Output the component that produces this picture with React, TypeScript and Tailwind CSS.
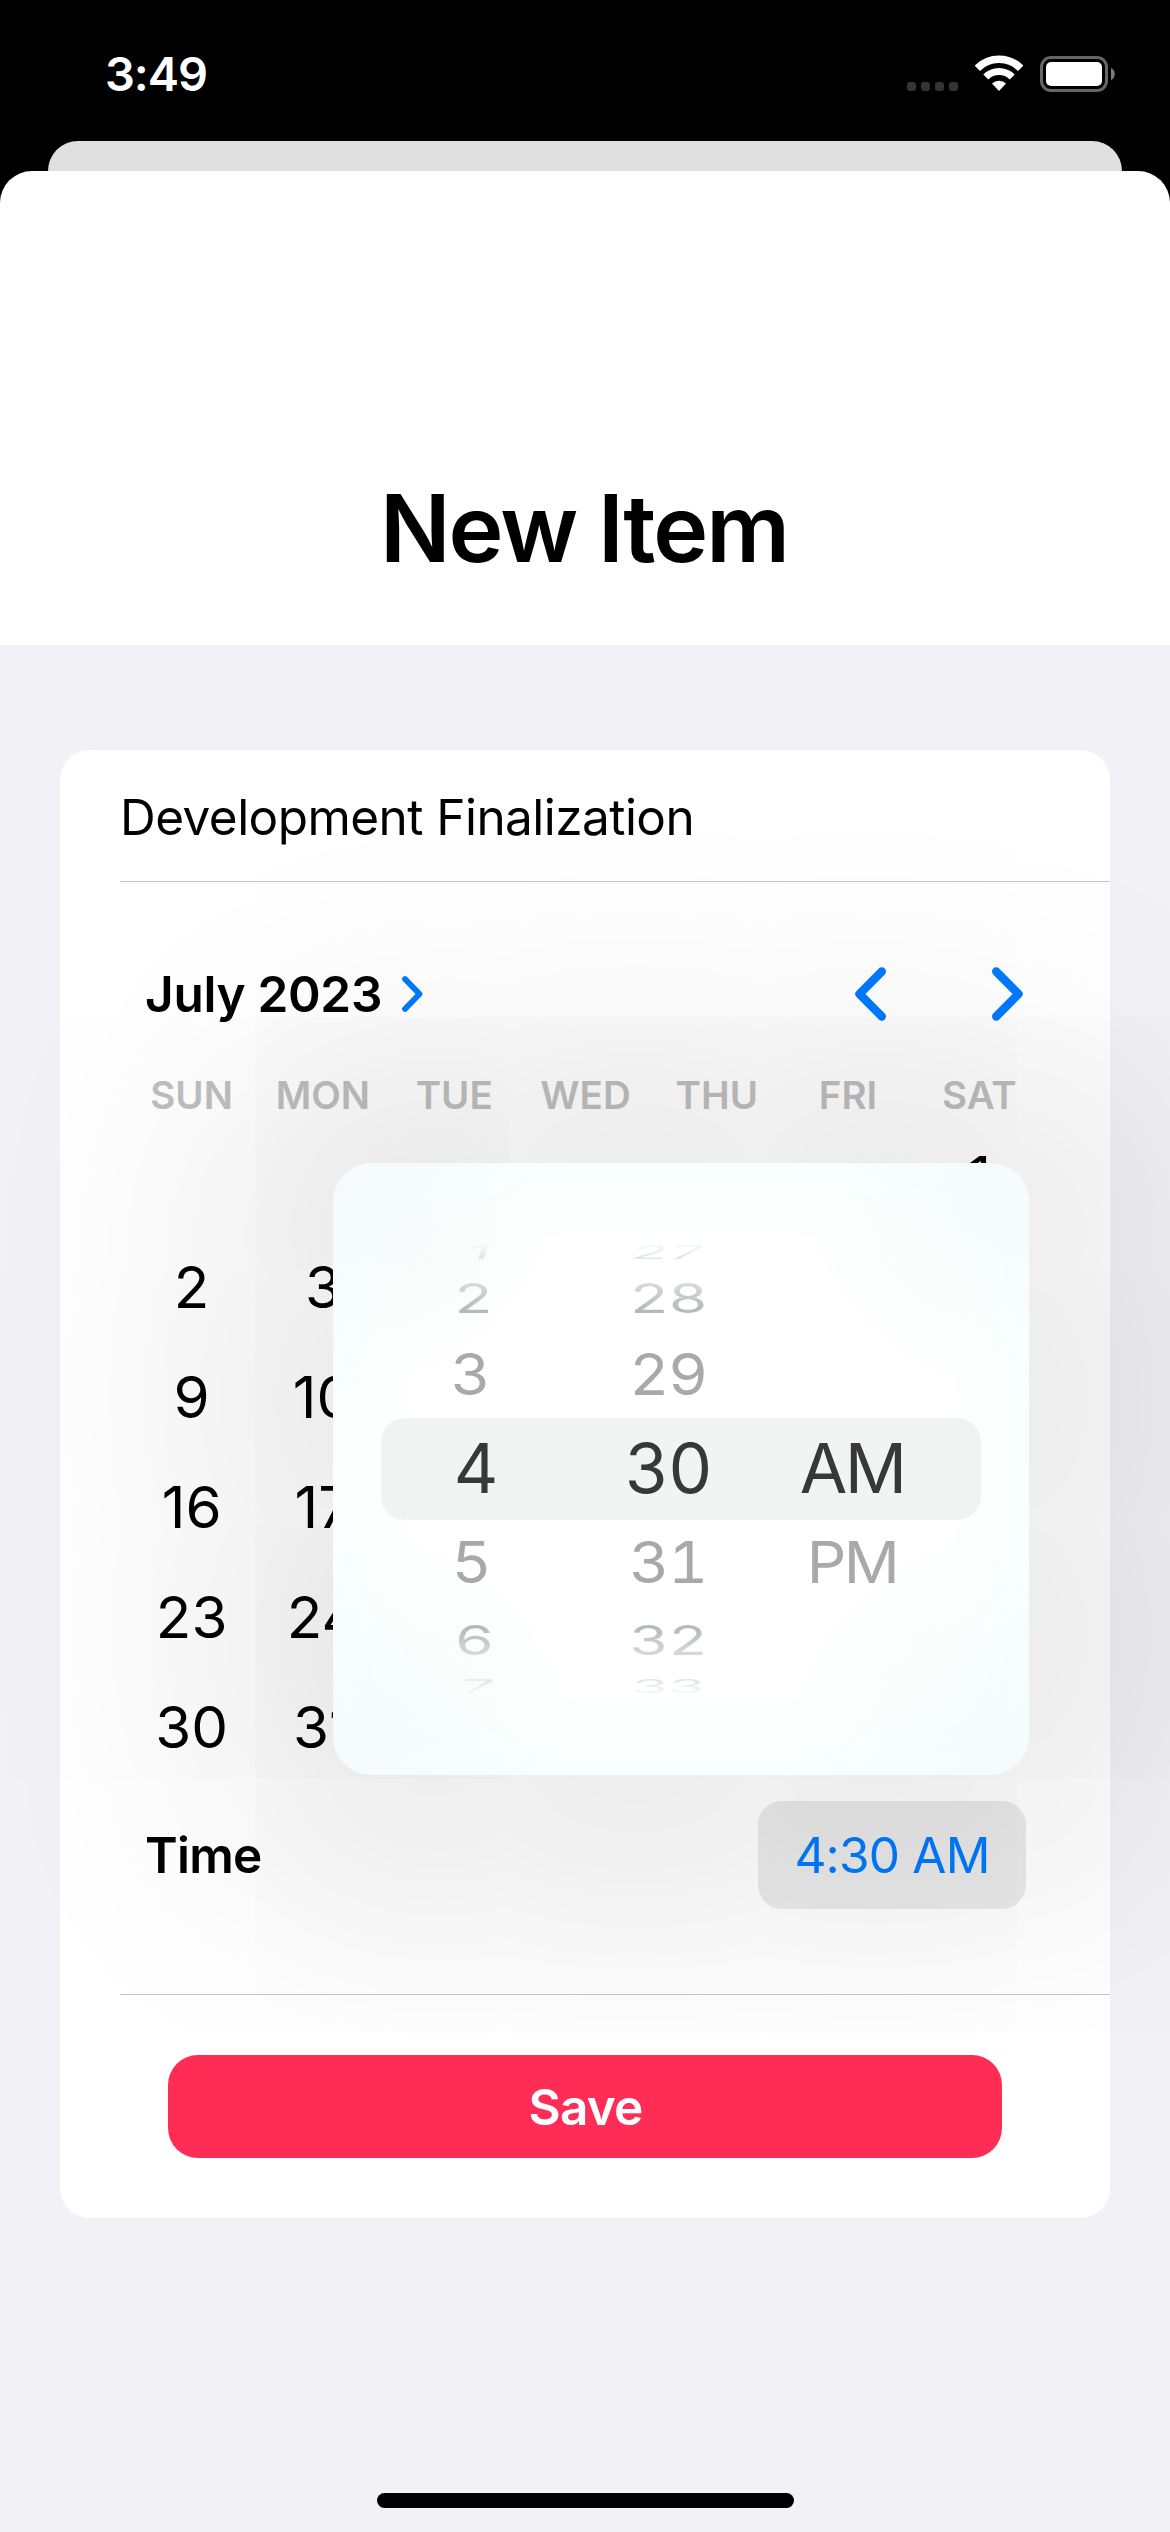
import React from "react";

const WEEKDAYS = ["SUN", "MON", "TUE", "WED", "THU", "FRI", "SAT"];
const LEADING_BLANKS = 6;
const DAYS = Array.from({ length: 31 }, (_, i) => i + 1);

// The open time popover covers everything from Tuesday on, except the top of the 1st.
const isCovered = (day: number) => day !== 1 && (day + LEADING_BLANKS - 1) % 7 > 1;

function StatusBar() {
  return (
    <div className="flex h-[141px] items-start justify-between pl-[105px] pr-[55px]">
      <div className="mt-[45px] text-[47px] leading-[58px] font-semibold tracking-[-1.1px] text-white">3:49</div>
      <div className="mt-[55px] flex h-[37px] items-start">
        <div className="mt-[27px] flex gap-[5px]">
          {[0, 1, 2, 3].map((i) => (
            <span key={i} className="size-[9px] rounded-[3px] bg-[#343434]" />
          ))}
        </div>
        <svg className="ml-[17px]" width="48" height="36" viewBox="0 0 48 36" fill="none">
          <path d="M2.3 13.3 A30.6 30.6 0 0 1 45.7 13.3" stroke="#fff" strokeWidth="7.6" />
          <path d="M10.8 22 A18.6 18.6 0 0 1 37.2 22" stroke="#fff" strokeWidth="7" />
          <path d="M24 36 L17 28.6 A10 10 0 0 1 31 28.6 Z" fill="#fff" />
        </svg>
        <svg className="ml-[17px]" width="75" height="37" viewBox="0 0 75 37" fill="none">
          <rect x="1.5" y="2.5" width="65" height="33" rx="9.5" stroke="#666" strokeWidth="3" />
          <rect x="6" y="7" width="56" height="24" rx="5" fill="#fff" />
          <path d="M71 13 C76 15 76 23 71 25 Z" fill="#7c7c7c" />
        </svg>
      </div>
    </div>
  );
}

function Calendar() {
  return (
    <div className="ml-[66px] w-[919px]">
      <div className="mt-[38px] flex h-[148px] items-center pl-[19px] pr-[22px]">
        <div className="text-[49.5px] leading-[60px] font-semibold tracking-[-0.3px]">July 2023</div>
        <svg className="ml-[19px]" width="24" height="38" viewBox="0 0 24 38" fill="none">
          <path d="M4 4 L18.5 19 L4 34" stroke="#007aff" strokeWidth="5.8" strokeLinecap="round" strokeLinejoin="round" />
        </svg>
        <div className="ml-auto flex gap-[106px]">
          <svg width="31" height="54" viewBox="0 0 31 54" fill="none">
            <path d="M26.8 4.5 L4.5 27 L26.8 49.5" stroke="#007aff" strokeWidth="8.4" strokeLinecap="round" strokeLinejoin="round" />
          </svg>
          <svg width="31" height="54" viewBox="0 0 31 54" fill="none">
            <path d="M4.2 4.5 L26.5 27 L4.2 49.5" stroke="#007aff" strokeWidth="8.4" strokeLinecap="round" strokeLinejoin="round" />
          </svg>
        </div>
      </div>
      <div className="grid h-[54px] grid-cols-7 items-center text-center text-[38.5px] leading-[46px] font-semibold text-[#bfbfc0]">
        {WEEKDAYS.map((d) => (
          <span key={d}>{d}</span>
        ))}
      </div>
      <div className="grid grid-cols-7 text-center text-[58.3px] leading-[110px]">
        {Array.from({ length: LEADING_BLANKS }, (_, i) => (
          <span key={`blank-${i}`} />
        ))}
        {DAYS.map((d) => (
          <span key={d} className="h-[110px]">
            {isCovered(d) ? null : d}
          </span>
        ))}
      </div>
    </div>
  );
}

const ROWS = [
  {
    box: "h-6",
    text: "text-[59px] leading-[60px] scale-y-[.32] -skew-x-6 bg-linear-to-b from-[#f3f6f6] from-30% to-[#e2e6e6] to-75% bg-clip-text text-transparent",
  },
  {
    box: "h-[68px]",
    text: "text-[62px] leading-[64px] scale-y-[.66] bg-linear-to-b from-[#d6d8d8] from-20% to-[#b6b9b9] to-80% bg-clip-text text-transparent",
  },
  { box: "h-[86px]", text: "text-[62px] leading-[84px] scale-y-[.92] text-[#a9a9a9]" },
  { box: "h-[102px]", text: "text-[69px] leading-[84px] -translate-y-px text-[#383839]" },
  { box: "h-[86px]", text: "text-[62px] leading-[84px] scale-y-[.92] text-[#a9a9a9]" },
  {
    box: "h-[68px]",
    text: "text-[62px] leading-[64px] scale-y-[.66] bg-linear-to-b from-[#b6b9b9] from-20% to-[#d6d8d8] to-80% bg-clip-text text-transparent",
  },
  {
    box: "h-6",
    text: "text-[59px] leading-[60px] scale-y-[.32] -skew-x-3 bg-linear-to-b from-[#e2e6e6] from-25% to-[#f3f6f6] to-75% bg-clip-text text-transparent",
  },
];

function Wheel({ values, className, shifts }: { values: string[]; className: string; shifts?: string[] }) {
  return (
    <div className={`relative flex flex-col ${className}`}>
      {ROWS.map((row, i) => (
        <div key={i} className={`flex items-center justify-center ${row.box} ${shifts ? shifts[i] : ""}`}>
          {values[i] && <span className={row.text}>{values[i]}</span>}
        </div>
      ))}
    </div>
  );
}

function TimePopover() {
  return (
    <div className="absolute left-[273px] top-[413px] h-[612px] w-[696px] rounded-[39px] bg-[#fefffe] shadow-[0_0_260px_115px_rgba(0,0,0,0.105)]">
      <div className="h-full rounded-[39px] bg-[radial-gradient(circle_at_0%_0%,#f3f7f7_0%,transparent_26%),radial-gradient(circle_at_100%_0%,#f3f8f8_0%,transparent_26%),radial-gradient(circle_at_0%_100%,#f2f9f9_0%,transparent_28%),radial-gradient(circle_at_100%_100%,#f3f9f9_0%,transparent_28%)] px-12 pt-[77px] shadow-[inset_0_0_110px_#f4fefe]">
        <div className="relative flex">
          <div className="absolute left-0 top-[178px] h-[102px] w-[600px] rounded-[24px] bg-[#6c6470]/8" />
          <Wheel
            className="w-[190px]"
            values={["1", "2", "3", "4", "5", "6", "7"]}
            shifts={["pl-[6px]", "pr-[5px]", "pr-[12px]", "pr-0", "pr-[10px]", "pr-[3px]", "pl-[4px]"]}
          />
          <Wheel
            className="w-[192px] pl-[2px] tracking-[-1.5px] tabular-nums"
            values={["27", "28", "29", "30", "31", "32", "33"]}
          />
          <Wheel className="w-[178px] tracking-[-2.6px]" values={["", "", "", "AM", "PM", "", ""]} />
        </div>
      </div>
    </div>
  );
}

export default function App() {
  return (
    <div className="h-[2532px] w-[1170px] overflow-hidden bg-black font-['Inter','Liberation_Sans',sans-serif] text-black">
      <StatusBar />
      <div className="mx-[48px] h-[30px] rounded-t-[30px] bg-[#e0e0e0]" />
      <div className="h-[2361px] overflow-hidden rounded-t-[32px] bg-white">
        <div className="h-[474px] pt-[301px] pr-[2px] text-center text-[93px] leading-[112px] font-semibold tracking-[-1.9px]">
          New Item
        </div>
        <div className="flex h-[1887px] flex-col bg-[#f2f1f6] pt-[105px]">
          <div className="relative mx-[60px] h-[1468px] rounded-[30px] bg-white">
            <div className="flex h-[131px] items-center pl-[60px] pt-[3px] text-[49.5px] tracking-[-0.55px]">Development Finalization</div>
            <div className="ml-[60px] h-px bg-[#c6c6c8]" />
            <Calendar />
            <div className="mt-[19px] flex h-[108px] items-center justify-between pl-[85px] pr-[84px]">
              <div className="pt-px text-[49.5px] font-semibold tracking-[-0.7px]">Time</div>
              <div className="flex h-[108px] w-[268px] items-center justify-center rounded-[24px] bg-[#eaeaea] pt-px text-[49.5px] tracking-[-0.8px] text-[#007aff]">
                4:30 AM
              </div>
            </div>
            <div className="mt-[85px] ml-[60px] h-px bg-[#c6c6c8]" />
            <div className="mx-[108px] mt-[60px] flex h-[103px] items-center justify-center rounded-[30px] bg-[#ff2d55] pl-px pt-px text-[49.5px] font-semibold tracking-[-0.8px] text-white">
              Save
            </div>
            <TimePopover />
          </div>
          <div className="mx-auto mt-auto mb-[24px] h-[15px] w-[417px] rounded-full bg-black" />
        </div>
      </div>
    </div>
  );
}
